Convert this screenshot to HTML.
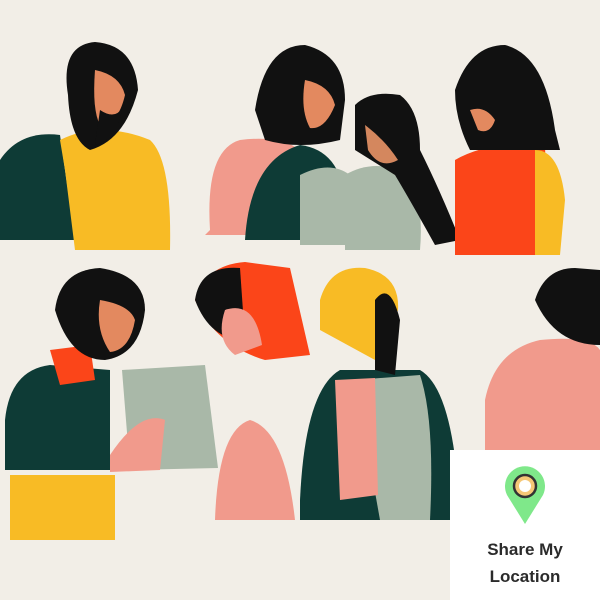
<!DOCTYPE html>
<html><head><style>
body{margin:0;width:600px;height:600px;overflow:hidden;background:#f2eee7;font-family:"Liberation Sans",sans-serif}
svg{position:absolute;left:0;top:0}
.card{position:absolute;left:450px;top:450px;width:150px;height:150px;background:#fff}
.t{position:absolute;left:0;width:150px;text-align:center;font-weight:bold;font-size:17px;color:#2b2b2b;line-height:27px;top:86px}
</style></head><body>
<svg width="600" height="600" viewBox="0 0 600 600">
<!-- person 1 -->
<path d="M0 160 Q20 130 60 135 L75 240 L0 240Z" fill="#0e3b36"/>
<path d="M60 140 Q100 120 150 140 Q172 160 170 250 L75 250 L65 170Z" fill="#f8bb25"/>
<path d="M68 95 Q60 45 95 42 Q135 45 138 90 Q125 140 90 150 Q70 140 68 95Z" fill="#111"/>
<path d="M95 70 Q120 75 125 95 Q118 125 100 125 Q92 110 95 70Z" fill="#e3895f"/>
<path d="M100 110 Q115 120 122 108 Q118 140 95 145Z" fill="#111"/>
<!-- persons 2,3,4 -->
<path d="M210 230 Q205 150 240 140 Q280 135 300 150 L310 235 L205 235Z" fill="#f19a8c"/>
<path d="M245 240 Q250 160 300 145 Q340 150 345 200 L340 240Z" fill="#0e3b36"/>
<path d="M255 110 Q265 45 305 45 Q345 55 345 100 L340 140 Q300 150 265 140Z" fill="#111"/>
<path d="M305 80 Q330 85 335 105 Q325 130 310 128 Q300 110 305 80Z" fill="#e3895f"/>
<path d="M300 175 Q330 160 350 175 L360 245 L300 245Z" fill="#a9b8a8"/>
<path d="M345 175 Q370 160 400 170 Q425 190 420 250 L345 250Z" fill="#a9b8a8"/>
<path d="M355 105 Q370 90 400 95 Q420 110 420 150 Q440 190 460 240 L435 245 Q410 200 395 175 L355 150Z" fill="#111"/>
<path d="M365 125 Q385 140 398 160 Q380 170 368 150Z" fill="#d4875e"/>
<path d="M455 160 Q490 140 545 145 L548 255 L455 255Z" fill="#fb4519"/>
<path d="M535 150 Q560 150 565 200 L560 255 L535 255Z" fill="#f8bb25"/>
<path d="M455 90 Q470 45 505 45 Q545 55 555 130 L560 150 L470 150 Q455 120 455 90Z" fill="#111"/>
<path d="M470 110 Q485 105 495 120 Q490 135 478 130Z" fill="#e3895f"/>
<!-- bottom left person -->
<path d="M5 420 Q10 370 50 365 L110 370 L110 470 L5 470Z" fill="#0e3b36"/>
<rect x="10" y="475" width="105" height="65" fill="#f8bb25"/>
<path d="M50 350 L90 345 L95 380 L60 385Z" fill="#fb4519"/>
<path d="M55 310 Q60 270 100 268 Q145 275 145 310 Q140 355 105 360 Q70 360 55 310Z" fill="#111"/>
<path d="M100 300 Q130 305 135 320 Q130 350 110 352 Q95 330 100 300Z" fill="#e3895f"/>
<path d="M122 370 L205 365 L218 468 L130 470Z" fill="#a9b8a8"/>
<path d="M110 455 Q140 410 165 420 L160 470 L110 472Z" fill="#f19a8c"/>
<!-- middle -->
<path d="M195 300 Q205 265 245 262 L290 268 L310 355 L265 360 Q215 345 195 300Z" fill="#fb4519"/>
<path d="M195 300 Q200 265 240 268 L245 340 Q210 340 195 300Z" fill="#111"/>
<path d="M225 310 Q255 300 262 345 L235 355 Q215 340 225 310Z" fill="#f19a8c"/>
<path d="M215 520 Q218 430 250 420 Q285 430 295 520Z" fill="#f19a8c"/>
<path d="M320 300 Q330 265 365 268 Q400 275 398 310 L375 360 L320 330Z" fill="#f8bb25"/>
<path d="M300 500 Q305 390 340 370 L420 370 Q455 390 460 520 L300 520Z" fill="#0e3b36"/>
<path d="M355 380 L420 375 Q435 420 430 520 L380 520Z" fill="#a9b8a8"/>
<path d="M335 380 L375 378 L378 495 L340 500Z" fill="#f19a8c"/>
<path d="M375 300 Q390 280 400 320 L395 375 L375 370Z" fill="#111"/>
<!-- right -->
<path d="M485 400 Q495 350 540 340 Q590 335 600 350 L600 450 L485 450Z" fill="#f19a8c"/>
<path d="M535 300 Q545 268 575 268 L600 270 L600 345 Q555 345 535 300Z" fill="#111"/>
</svg>
<div class="card">
<svg width="150" height="150" viewBox="0 0 150 150" style="position:absolute;left:0;top:0">
<path d="M75 74 L57 45 A20 20 0 1 1 93 45Z" fill="#7fe88a"/>
<circle cx="75" cy="36" r="11" fill="#f5c776" stroke="#333" stroke-width="2.5"/>
<circle cx="75" cy="36" r="6" fill="#fff"/>
</svg>
<div class="t">Share My<br>Location</div>
</div>
</body></html>
